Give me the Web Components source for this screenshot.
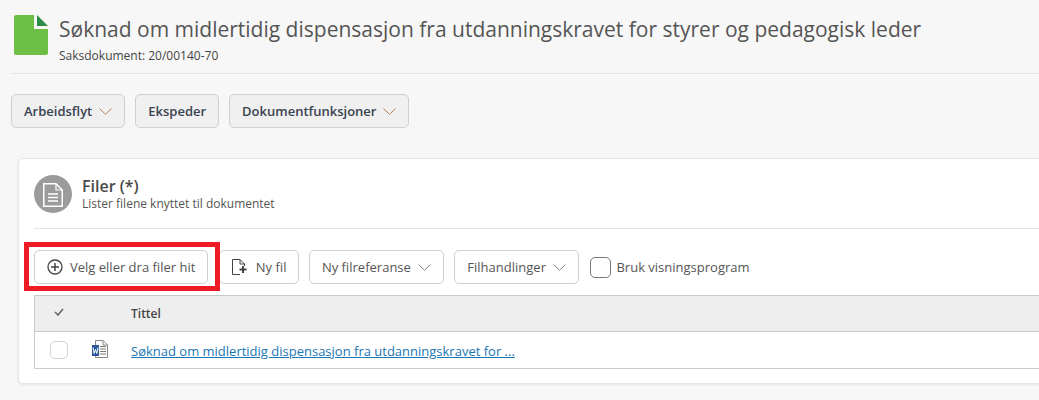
<!DOCTYPE html>
<html lang="no">
<head>
<meta charset="utf-8">
<title>Saksdokument</title>
<style>
    html, body { margin: 0; height: 100%; overflow: hidden; }
    body { background: #f7f7f7; font-family: "Open Sans", sans-serif; color: #3c3c3c; }
</style>
</head>
<body>
<doc-page>
    <doc-header slot="header" title-text="Søknad om midlertidig dispensasjon fra utdanningskravet for styrer og pedagogisk leder" sub="Saksdokument: 20/00140-70"></doc-header>
    <div slot="actions">
        <action-button variant="gray" chevron>Arbeidsflyt</action-button>
        <action-button variant="gray">Ekspeder</action-button>
        <action-button variant="gray" chevron>Dokumentfunksjoner</action-button>
    </div>
    <file-card slot="card"></file-card>
</doc-page>

<script>
class DocPage extends HTMLElement {
    constructor() {
        super();
        this.attachShadow({ mode: 'open' });
        this.shadowRoot.innerHTML = `
            <style>
                :host { display: block; }
                .actions { padding: 20px 11px 0; height: 34px; }
                ::slotted([slot=actions]) { display: flex; gap: 10px; }
                .card { padding: 30px 0 0 18px; }
            </style>
            <slot name="header"></slot>
            <div class="actions"><slot name="actions"></slot></div>
            <div class="card"><slot name="card"></slot></div>
        `;
    }
}

class DocHeader extends HTMLElement {
    constructor() {
        super();
        this.attachShadow({ mode: 'open' });
    }

    connectedCallback() {
        this.shadowRoot.innerHTML = `
            <style>
                :host { display: block; margin-left: 11px; height: 73px; border-bottom: 1px solid #e2e2e2; }
                .wrap { display: flex; padding: 15px 0 0 3px; gap: 11px; }
                svg { display: block; flex: none; }
                h1 { margin: 0; font-size: 21px; font-weight: 400; line-height: 28px; color: #555; white-space: nowrap; }
                p { margin: 5px 0 0; font-size: 12px; line-height: 16px; color: #444; }
            </style>
            <div class="wrap">
                <svg width="34" height="40" viewBox="0 0 34 40">
                    <path d="M2 0H20V14H34V38a2 2 0 0 1-2 2H2a2 2 0 0 1-2-2V2a2 2 0 0 1 2-2Z" fill="#6cbe45"/>
                    <path d="M23 0L34 11H23Z" fill="#2e8b44"/>
                </svg>
                <div>
                    <h1>${this.getAttribute('title-text')}</h1>
                    <p>${this.getAttribute('sub')}</p>
                </div>
            </div>
        `;
    }
}

class ActionButton extends HTMLElement {
    constructor() {
        super();
        this.attachShadow({ mode: 'open' });
    }

    connectedCallback() {
        const gray = this.getAttribute('variant') === 'gray';
        const chevron = this.hasAttribute('chevron')
            ? `<svg width="13" height="7" viewBox="0 0 13 7"><path d="M0.500 0.500L6.500 6.300L12.500 0.500" fill="none" stroke="${gray ? '#b97f5e' : '#808488'}"/></svg>`
            : '';
        this.shadowRoot.innerHTML = `
            <style>
                :host { display: inline-flex; }
                button {
                    display: flex; align-items: center; gap: var(--icon-gap, 7px); height: 34px; padding: 0 12px;
                    box-sizing: border-box; font: ${gray ? 600 : 400} 13px "Open Sans", sans-serif;
                    color: ${gray ? '#3a4350' : '#555'};
                    background: ${gray ? '#f0f0f0' : '#fff'};
                    border: 1px solid #d0d0d0; border-radius: 5px; white-space: nowrap;
                }
            </style>
            <button><slot name="icon"></slot><slot></slot>${chevron}</button>
        `;
    }
}

class FileCard extends HTMLElement {
    constructor() {
        super();
        this.attachShadow({ mode: 'open' });
        this.shadowRoot.innerHTML = `
            <style>
                :host { display: block; width: 1100px; height: 226px; box-sizing: border-box; background: #fff; border: 1px solid #e6e6e6; border-radius: 5px; box-shadow: 0 1px 3px rgba(0,0,0,.08); padding: 0 15px; }
                .head { display: flex; align-items: center; gap: 10px; height: 69px; border-bottom: 1px solid #e2e2e2; }
                .badge { width: 38px; height: 38px; flex: none; display: block; }
                h2 { margin: 0; font-size: 16px; font-weight: 600; line-height: 20px; color: #4a4a4a; }
                p { margin: 0; font-size: 12px; line-height: 16px; color: #555; }
                .toolbar { display: flex; align-items: center; gap: 10.500px; padding-top: 21px; height: 34px; position: relative; }
                .new-file { --icon-gap: 8px; margin-right: -1px; }
                .check { display: flex; align-items: center; gap: 5px; margin-left: 1px; font-size: 13px; color: #555; white-space: nowrap; }
                .check i { width: 21px; height: 21px; box-sizing: border-box; border: 1px solid #777; border-radius: 5px; display: block; }
                .marker { position: absolute; left: -10px; top: 13px; width: 186px; height: 39px; border: 5px solid #ed1c24; pointer-events: none; }
                file-table { margin-top: 11px; }
            </style>
            <div class="head">
                <svg class="badge" viewBox="0 0 38 38">
                    <circle cx="19" cy="19" r="19" fill="#9b9b9b"/>
                    <path d="M9.750 8.750H22L28.250 15V31.250H9.750Z" fill="none" stroke="#fff" stroke-width="1.500"/>
                    <path d="M22 8.750V15H28.250" fill="none" stroke="#fff" stroke-width="1.200"/>
                    <path d="M14 19H24M14 22.500H24M14 26H24" stroke="#fff" stroke-width="1.500"/>
                </svg>
                <div>
                    <h2>Filer (*)</h2>
                    <p>Lister filene knyttet til dokumentet</p>
                </div>
            </div>
            <div class="toolbar">
                <action-button>
                    <svg slot="icon" width="16" height="16" viewBox="0 0 16 16"><circle cx="8" cy="8" r="7" fill="none" stroke="#444" stroke-width="1.300"/><path d="M8 4V12M4 8H12" stroke="#444" stroke-width="1.500"/></svg>
                    Velg eller dra filer hit
                </action-button>
                <action-button class="new-file">
                    <svg slot="icon" width="16" height="16" viewBox="0 0 16 16"><path d="M8 15.500H0.500V0.500H8L12.500 5V7" fill="none" stroke="#444"/><path d="M8 0.500V5H12.500" fill="none" stroke="#444"/><path d="M11 7V14M7.500 10.500H14.500" stroke="#444" stroke-width="2"/></svg>
                    Ny fil
                </action-button>
                <action-button chevron>Ny filreferanse</action-button>
                <action-button chevron>Filhandlinger</action-button>
                <label class="check"><i></i>Bruk visningsprogram</label>
                <div class="marker"></div>
            </div>
            <file-table></file-table>
        `;
    }
}

class FileTable extends HTMLElement {
    constructor() {
        super();
        this.attachShadow({ mode: 'open' });
        this.shadowRoot.innerHTML = `
            <style>
                :host { display: block; border: 1px solid #cacaca; }
                .row { display: grid; grid-template-columns: 48px 48px 1fr; align-items: center; }
                .top { height: 35px; background: #eee; border-bottom: 1px solid #cacaca; font-size: 12px; font-weight: 600; color: #444; }
                .file { height: 36px; }
                .top svg { margin-left: 19px; margin-top: -3px; }
                .box { width: 18px; height: 18px; box-sizing: border-box; border: 1px solid #d2d2d2; border-radius: 5px; margin-left: 15px; margin-top: -1px; }
                .file svg { display: block; margin-left: 9px; margin-top: -3px; }
                a { color: #1a76b5; font-size: 13px; white-space: nowrap; margin-top: 2px; }
            </style>
            <div class="row top">
                <svg width="10" height="8" viewBox="0 0 10 8"><path d="M1 4L4 7L9 1" fill="none" stroke="#666" stroke-width="1.600"/></svg>
                <span></span>
                <span>Tittel</span>
            </div>
            <div class="row file">
                <div class="box"></div>
                <svg width="16" height="18" viewBox="0 0 16 18">
                    <path d="M3.500 0.500H11L15.500 5V17.500H3.500Z" fill="#fff" stroke="#888"/>
                    <path d="M11 0.500V5H15.500" fill="none" stroke="#888"/>
                    <path d="M8 6.500H14M8 9H14M8 11.500H14M8 14H14" stroke="#777"/>
                    <rect x="0" y="5" width="7" height="11" fill="#2b579a"/>
                    <path d="M1 7.500L2.200 13.500L3.500 9.500L4.800 13.500L6 7.500" fill="none" stroke="#fff"/>
                </svg>
                <a href="#">Søknad om midlertidig dispensasjon fra utdanningskravet for ...</a>
            </div>
        `;
    }
}

customElements.define('doc-page', DocPage);
customElements.define('doc-header', DocHeader);
customElements.define('action-button', ActionButton);
customElements.define('file-card', FileCard);
customElements.define('file-table', FileTable);
</script>
</body>
</html>
